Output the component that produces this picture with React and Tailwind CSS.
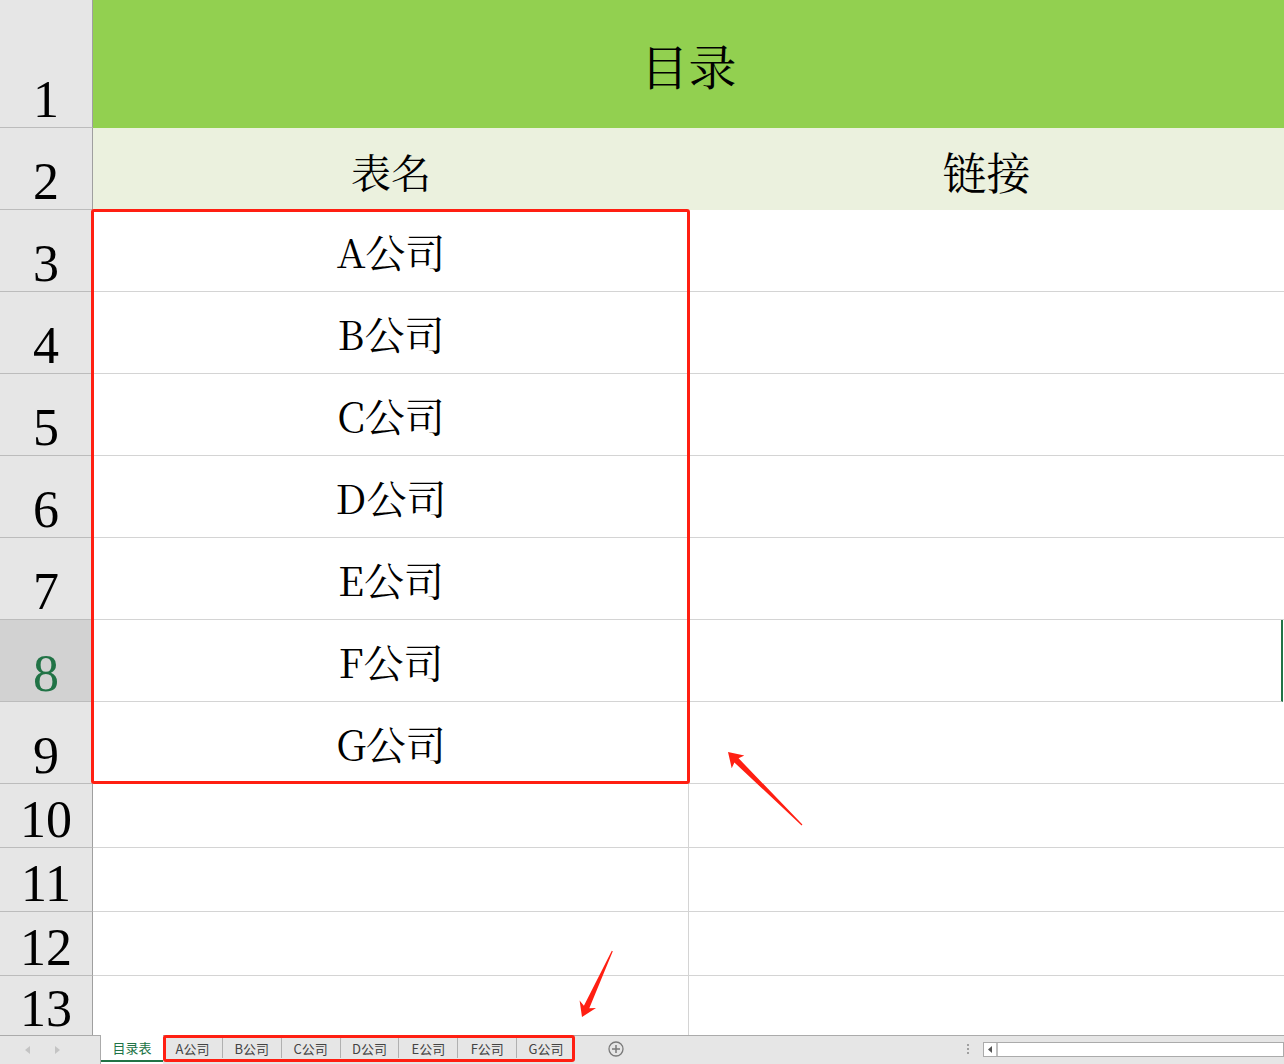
import React from "react";

const CJK = { fontFamily: '"Noto Serif CJK SC", "Liberation Serif", "Noto Sans CJK SC", serif' };
const NUM = { fontFamily: '"Liberation Serif", "Times New Roman", serif' };
const UI = { fontFamily: '"Noto Sans CJK SC", "Liberation Sans", sans-serif' };

function RowHead({ n, sel }) {
  return (
    <div
      className={`w-[93px] shrink-0 flex items-end justify-center pb-[1px] border-r border-b border-r-[#9f9f9f] border-b-[#bcbcbc] text-[52px] leading-none ${
        sel ? "bg-[#d2d2d2] text-[#217346]" : "bg-[#e6e6e6] text-black"
      }`}
      style={NUM}
    >
      {n}
    </div>
  );
}

function DataRow({ n, h, label, sel, grid }) {
  return (
    <div className={`flex shrink-0 ${h}`}>
      <RowHead n={n} sel={sel} />
      <div
        className={`w-[596px] shrink-0 flex items-center justify-center border-b border-[#d4d4d4] text-[40px] text-black ${
          grid ? "border-r border-r-[#d4d4d4]" : ""
        }`}
        style={CJK}
      >
        {label}
      </div>
      <div className={`flex-1 border-b border-[#d4d4d4] ${sel ? "border-r-2 border-r-[#217346] mr-[1px]" : ""}`} />
    </div>
  );
}

export default function App() {
  const companies = ["A", "B", "C", "D", "E", "F", "G"];
  return (
    <div className="relative w-[1284px] h-[1064px] overflow-hidden bg-white flex flex-col">
      {/* Row 1 */}
      <div className="flex shrink-0 h-[128px]">
        <RowHead n={1} />
        <div className="flex-1 bg-[#92d050] flex items-center justify-center pt-[2px] text-[48px] text-black" style={CJK}>
          目录
        </div>
      </div>
      {/* Row 2 */}
      <div className="flex shrink-0 h-[82px]">
        <RowHead n={2} />
        <div className="w-[596px] shrink-0 bg-[#ebf1de] flex items-center justify-center pt-[4px] text-[40px] text-black" style={CJK}>
          表名
        </div>
        <div className="flex-1 bg-[#ebf1de] flex items-center justify-center pt-[4px] text-[44px] text-black" style={CJK}>
          链接
        </div>
      </div>
      {companies.map((c, i) => (
        <DataRow key={c} n={i + 3} h="h-[82px]" label={`${c}公司`} sel={i + 3 === 8} />
      ))}
      <DataRow n={10} h="h-[64px]" label="" grid />
      <DataRow n={11} h="h-[64px]" label="" grid />
      <DataRow n={12} h="h-[64px]" label="" grid />
      <div className="flex flex-1 min-h-0">
        <div
          className="w-[93px] shrink-0 flex items-end justify-center border-r border-r-[#9f9f9f] bg-[#e6e6e6] text-[52px] leading-none text-black"
          style={NUM}
        >
          13
        </div>
        <div className="w-[596px] shrink-0 border-r border-r-[#d4d4d4]" />
        <div className="flex-1" />
      </div>

      {/* Sheet tab bar */}
      <div className="relative h-[29px] shrink-0 border-t border-[#ababab] bg-[#e6e6e6] flex items-stretch text-[13px] leading-none" style={UI}>
        <div className="w-[100px] shrink-0 flex items-center pl-[25px] gap-[23px]">
          <svg width="6" height="8" viewBox="0 0 6 8"><path d="M5 0 L0 4 L5 8 Z" fill="#c4c4c4" /></svg>
          <svg width="6" height="8" viewBox="0 0 6 8"><path d="M1 0 L6 4 L1 8 Z" fill="#c4c4c4" /></svg>
        </div>
        <div className="w-[63px] shrink-0 -mt-[1px] pb-[4px] bg-white border-l border-[#ababab] flex items-center justify-center text-[#217346] relative">
          目录表
          <div className="absolute left-0 right-0 bottom-[2px] h-[2px] bg-[#217346]" />
        </div>
        <div className="relative flex items-stretch w-[412px] shrink-0">
          {companies.map((c, i) => (
            <div key={c} className="flex-1 flex items-center">
              <div
                className={`w-full h-[20px] mb-[4px] flex items-center justify-center text-[#444444] ${i > 0 ? "border-l border-[#b0b0b0]" : ""}`}
              >
                {c}公司
              </div>
            </div>
          ))}
          <div className="absolute left-0 -top-[1px] w-[412px] h-[27px] border-[3px] border-[#ff1f12] rounded-[3px]" />
        </div>
        <div className="ml-[33px] flex items-center pb-[2px]">
          <svg width="16" height="16" viewBox="0 0 16 16">
            <circle cx="8" cy="8" r="7" fill="none" stroke="#7a7a7a" strokeWidth="1.3" />
            <path d="M8 4 V12 M4 8 H12" stroke="#7a7a7a" strokeWidth="1.5" />
          </svg>
        </div>
        <div className="flex-1" />
        <div className="flex flex-col justify-center gap-[2px] mr-[14px] pb-[2px]">
          <div className="w-[2px] h-[2px] bg-[#a0a0a0]" />
          <div className="w-[2px] h-[2px] bg-[#a0a0a0]" />
          <div className="w-[2px] h-[2px] bg-[#a0a0a0]" />
        </div>
        <div className="w-[301px] shrink-0 flex items-center pb-[2px]">
          <div className="flex h-[15px] w-full border border-[#ababab] bg-white">
            <div className="w-[14px] flex items-center justify-center border-r-2 border-[#c0c0c0]">
              <svg width="4" height="7" viewBox="0 0 4 7"><path d="M4 0 L0 3.5 L4 7 Z" fill="#555" /></svg>
            </div>
            <div className="flex-1" />
          </div>
        </div>
      </div>

      {/* Annotations */}
      <div className="absolute left-[91px] top-[209px] w-[599px] h-[575px] border-[3px] border-[#ff1f12] rounded-[3px] pointer-events-none" />
      <svg className="absolute left-0 top-0 pointer-events-none" width="1284" height="1064" viewBox="0 0 1284 1064">
        <polygon points="728,752 744.3,755.4 738.6,758.3 802.4,824.6 801.6,825.4 734.4,762.5 731.7,768.2" fill="#ff1f12" />
        <polygon points="582,1017 596,1008 589.3,1008.2 612.8,951.2 611.8,950.8 583.9,1005.7 579.6,1000.6" fill="#ff1f12" />
      </svg>
    </div>
  );
}
